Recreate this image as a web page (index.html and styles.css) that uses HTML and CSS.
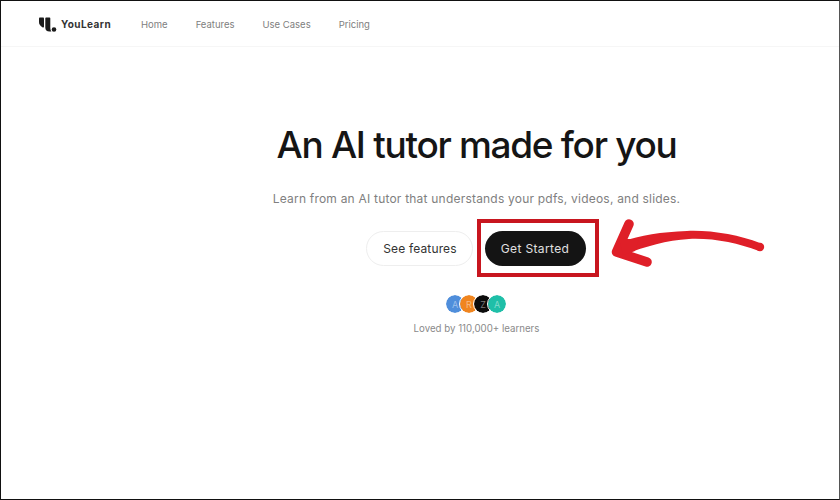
FILE: index.html
```html
<!DOCTYPE html>
<html lang="en">
<head>
<meta charset="utf-8">
<title>YouLearn</title>
<link rel="stylesheet" href="styles.css">
</head>
<body>
<div class="frame">
  <header class="nav">
    <a class="brand">
      <svg class="logo" width="19" height="18" viewBox="0 0 19 18">
        <path d="M1 3.2 Q1 2.5 1.8 2.5 H5.2 Q6 2.5 6 3.2 V11.5 Q6 13 4.7 12.4 Q1 10.5 1 7 Z" fill="#1a1a1a"/>
        <path d="M7.3 3.2 Q7.3 2.5 8.1 2.5 H11.5 Q12.3 2.5 12.3 3.2 V13 Q12.3 15.3 13.4 16.6 H11.5 Q7.3 16.4 7.3 12.5 Z" fill="#1a1a1a"/>
        <circle cx="16" cy="14.5" r="2.3" fill="#1a1a1a"/>
      </svg>
      <span class="brand-name">YouLearn</span>
    </a>
    <nav class="links">
      <a>Home</a>
      <a>Features</a>
      <a>Use Cases</a>
      <a>Pricing</a>
    </nav>
  </header>
  <main class="hero">
    <h1>An AI tutor made for you</h1>
    <p class="lead">Learn from an AI tutor that understands your pdfs, videos, and slides.</p>
    <div class="actions">
      <a class="btn btn-ghost">See features</a>
      <a class="btn btn-dark">Get Started</a>
    </div>
    <div class="avatars">
      <span class="av av-blue">A</span>
      <span class="av av-orange">R</span>
      <span class="av av-black">Z</span>
      <span class="av av-teal">A</span>
    </div>
    <p class="loved">Loved by 110,000+ learners</p>
  </main>
  <div class="red-box"></div>
  <svg class="arrow" width="170" height="70" viewBox="0 0 170 70">
    <path d="M161 34 C140 26 112 21 88 22 C62 23 42 26 22 33 L26 45 C46 38 68 31 90 30 C115 29 138 34 160 42 Z" fill="#df1f28"/>
    <circle cx="161" cy="38" r="4.2" fill="#df1f28"/>
    <path d="M30 15 L17.5 43 L48 53" fill="none" stroke="#df1f28" stroke-width="9.5" stroke-linecap="round" stroke-linejoin="round"/>
    <path d="M20 30 L40 30 L36 42 L24 46 Z" fill="#df1f28"/>
  </svg>
</div>
</body>
</html>
```
FILE: styles.css
```css
* { box-sizing: border-box; }
html, body { margin: 0; padding: 0; }
body {
  width: 840px;
  height: 500px;
  background: #fff;
  font-family: Inter, "Liberation Sans", sans-serif;
  overflow: hidden;
}
.frame {
  position: relative;
  width: 840px;
  height: 500px;
  border: 1px solid #111;
  border-right-color: #555;
}
.nav {
  display: flex;
  align-items: center;
  height: 46px;
  padding-left: 37px;
  border-bottom: 1px solid #f6f6f6;
}
.brand { display: flex; align-items: center; gap: 4px; width: 103px; }
.brand-name {
  font-size: 10px;
  font-weight: 700;
  letter-spacing: .45px;
  color: #333;
}
.links { display: flex; gap: 28px; padding-top: 2px; }
.links a { font-size: 9.5px; color: #808080; }
.hero {
  display: flex;
  flex-direction: column;
  align-items: center;
  padding-left: 113px;
}
h1 {
  margin: 76px 0 0;
  font-size: 37px;
  line-height: 44px;
  font-weight: 500;
  letter-spacing: -1.3px;
  color: #151515;
}
.lead {
  margin: 23px 0 0;
  font-size: 12px;
  line-height: 18px;
  letter-spacing: .21px;
  color: #808080;
}
.actions { display: flex; gap: 12px; margin: 23px 0 0 -2px; }
.btn {
  display: flex;
  align-items: center;
  justify-content: center;
  height: 35px;
  border-radius: 18px;
  font-size: 12px;
  letter-spacing: .15px;
}
.btn-ghost { width: 107px; padding-left: 2px; border: 1px solid #eee; color: #333; }
.btn-dark { width: 101px; background: #141414; color: #e0e0e0; letter-spacing: .36px; }
.avatars { display: flex; margin: 29px 0 0 -1px; }
.av {
  display: flex;
  align-items: center;
  justify-content: center;
  width: 18px;
  height: 18px;
  margin-left: -4px;
  border-radius: 50%;
  outline: 1px solid #fff;
  font-size: 9px;
  color: rgba(255, 255, 255, .45);
}
.av:first-child { margin-left: 0; }
.av-blue { background: #4f8edb; }
.av-orange { background: #f0851f; }
.av-black { background: #0c0c0c; }
.av-teal { background: #1fbfa8; }
.loved {
  margin: 9px 0 0;
  font-size: 9.7px;
  line-height: 14px;
  color: #8a8a8a;
}
.red-box {
  position: absolute;
  left: 476px;
  top: 218px;
  width: 122px;
  height: 58px;
  border: 4px solid #c8161f;
}
.arrow { position: absolute; left: 598px; top: 208px; }
```
